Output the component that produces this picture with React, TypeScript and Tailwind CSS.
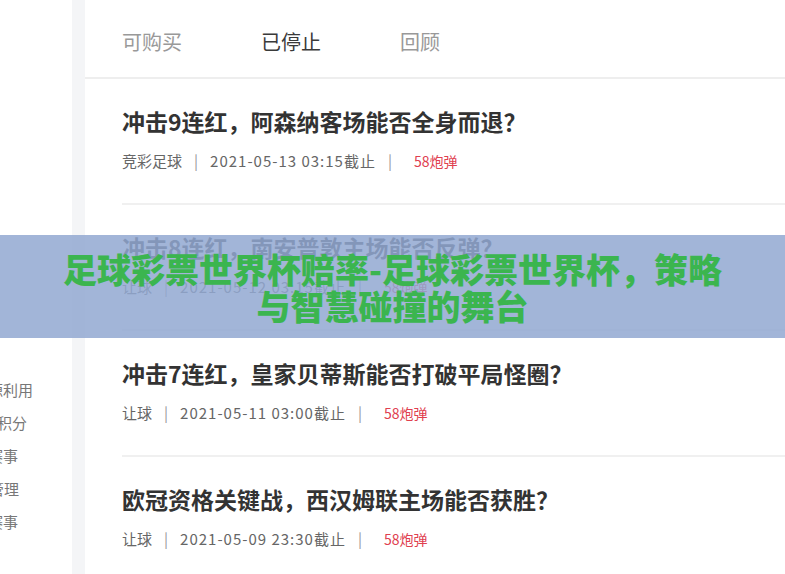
import React from "react";

interface Item {
  title: string;
  kind: string;
  deadline: string;
  reward: string;
}

const items: Item[] = [
  {
    title: "冲击9连红，阿森纳客场能否全身而退？",
    kind: "竞彩足球",
    deadline: "2021-05-13 03:15截止",
    reward: "58炮弹",
  },
  {
    title: "冲击8连红，南安普敦主场能否反弹？",
    kind: "让球",
    deadline: "2021-05-12 03:15截止",
    reward: "58炮弹",
  },
  {
    title: "冲击7连红，皇家贝蒂斯能否打破平局怪圈？",
    kind: "让球",
    deadline: "2021-05-11 03:00截止",
    reward: "58炮弹",
  },
  {
    title: "欧冠资格关键战，西汉姆联主场能否获胜？",
    kind: "让球",
    deadline: "2021-05-09 23:30截止",
    reward: "58炮弹",
  },
];

// side menu sits mostly off the left edge, only the tails show
const sideLinks = [
  { label: "资源利用", cls: "" },
  { label: "我的积分", cls: "-ml-[6px]" },
  { label: "热赛事", cls: "ml-[0px]" },
  { label: "单管理", cls: "ml-[1px]" },
  { label: "看赛事", cls: "ml-[0px]" },
];

const tabs = [
  { label: "可购买", active: false },
  { label: "已停止", active: true },
  { label: "回顾", active: false },
];

const SideMenu = () => (
  <div className="w-[72px] shrink-0 bg-white overflow-hidden">
    <div className="flex flex-col gap-[14px] pt-[380px] -ml-[27px] text-[15px] leading-[19px] text-[#777] whitespace-nowrap">
      {sideLinks.map((s) => (
        <div key={s.label} className={s.cls}>
          {s.label}
        </div>
      ))}
    </div>
  </div>
);

const ArticleRow = ({ item }: { item: Item }) => (
  <div className="pt-[28px] pb-[32px] border-b-2 border-[#f0f0f0]">
    <h3 className="text-[23px] leading-[28px] font-bold text-[#333]">
      {item.title}
    </h3>
    <div className="mt-[16px] flex items-center text-[15px] leading-5 text-[#666]">
      <span>{item.kind}</span>
      <span className="mx-[12px] text-[#999]">|</span>
      <span className="tracking-[1px]">{item.deadline}</span>
      <span className="mx-[12px] text-[#999]">|</span>
      <span className="ml-[10px] text-[14px] text-[#e0404f]">{item.reward}</span>
    </div>
  </div>
);

export default function App() {
  return (
    <div
      className="relative w-full h-[574px] overflow-hidden bg-white flex"
      style={{ fontFamily: '"Noto Sans CJK SC", "Noto Sans", sans-serif' }}
    >
      <SideMenu />
      <div className="w-[13px] shrink-0 bg-[#f4f5f7]" />

      <div className="flex-1 bg-white flex flex-col">
        {/* tabs */}
        <div className="h-[79px] shrink-0 border-b-2 border-[#eeeeee] pl-[37px] pt-[7px] flex items-center gap-[79px] text-[20px]">
          {tabs.map((t) => (
            <span
              key={t.label}
              className={t.active ? "text-[#3a3a3a]" : "text-[#999]"}
            >
              {t.label}
            </span>
          ))}
        </div>

        <div className="pl-[37px]">
          {items.map((it) => (
            <ArticleRow key={it.title} item={it} />
          ))}
        </div>
      </div>

      {/* headline banner */}
      <div className="absolute left-0 right-0 top-[235px] h-[103px] bg-[rgba(146,168,209,0.85)] flex items-center justify-center">
        <p className="max-w-[680px] text-center text-[34px] leading-[37px] font-black text-[#3bb54f]">
          足球彩票世界杯赔率-足球彩票世界杯，策略与智慧碰撞的舞台
        </p>
      </div>
    </div>
  );
}
